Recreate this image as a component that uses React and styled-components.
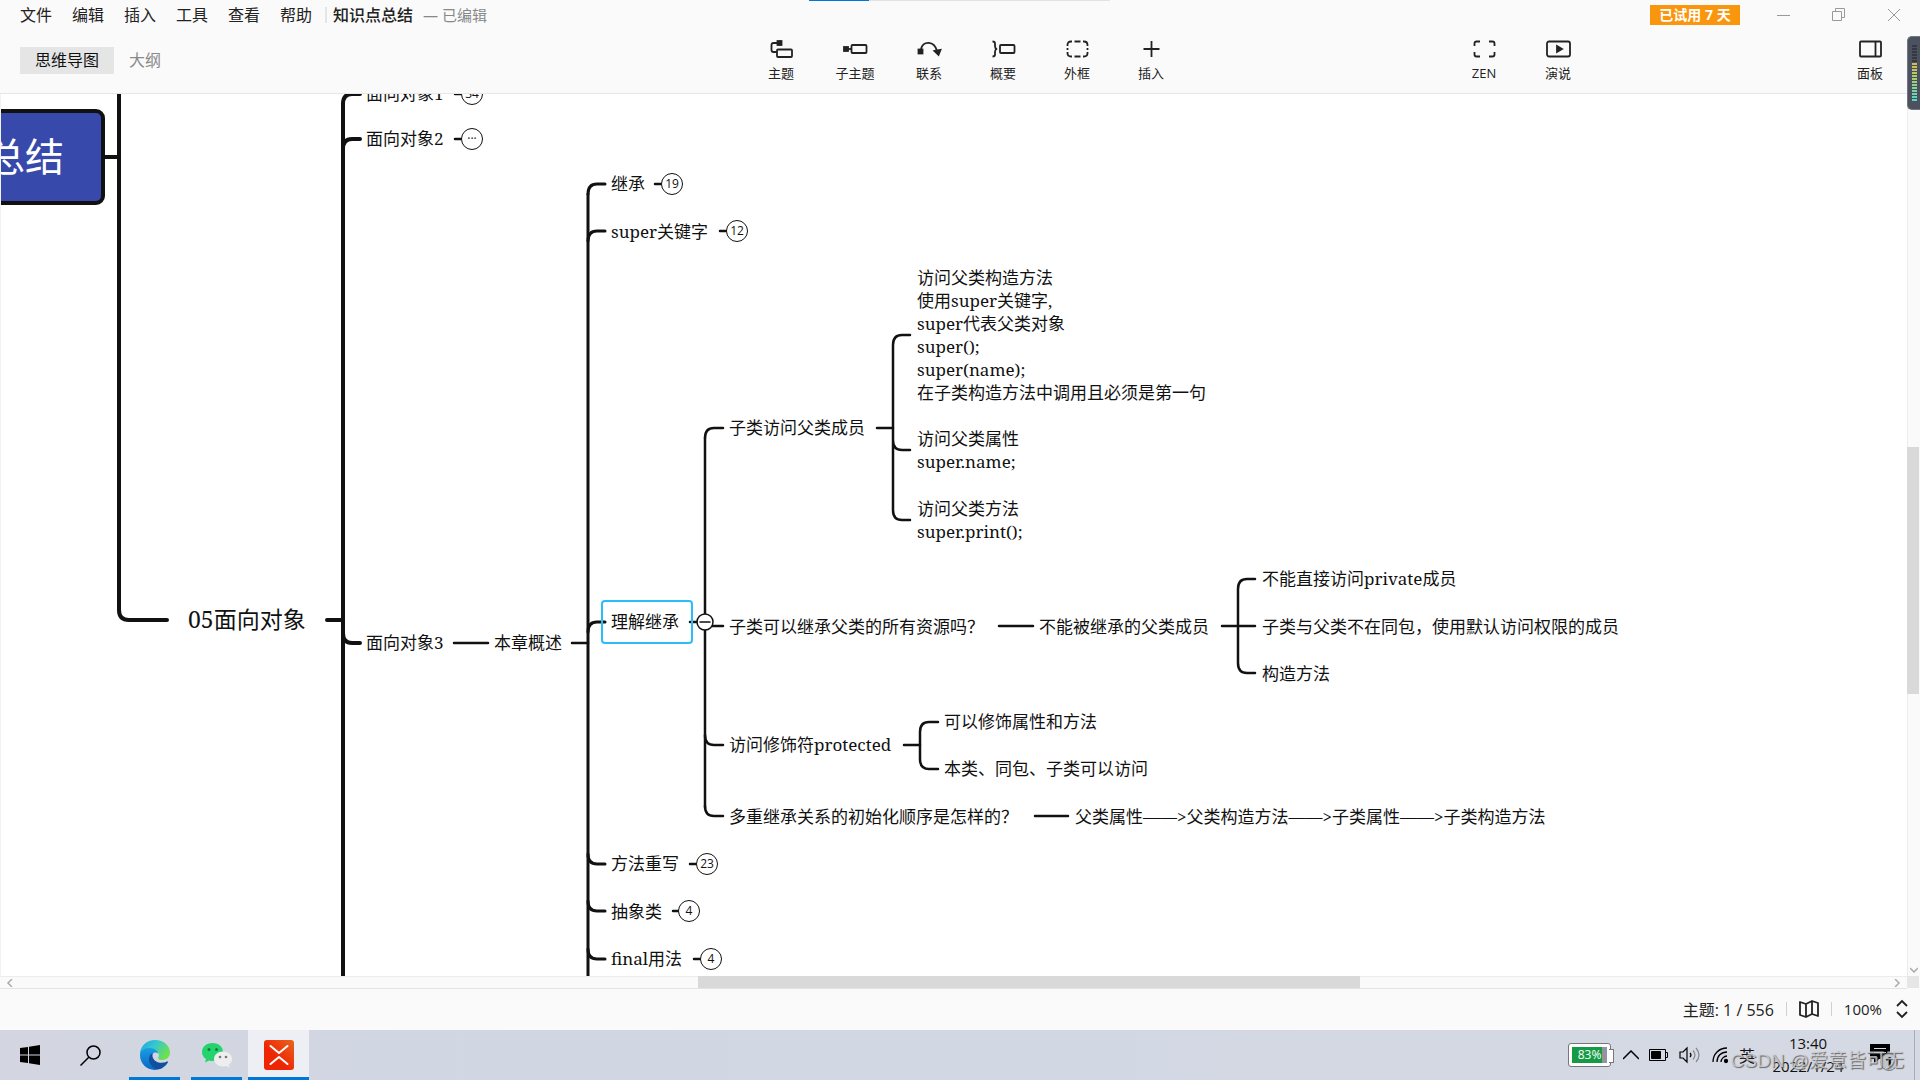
import React from 'react'
import styled, { createGlobalStyle } from 'styled-components'

const INK = '#111'

const GlobalStyle = createGlobalStyle`
    * {
        box-sizing: border-box;
    }
    body {
        margin: 0;
        overflow: hidden;
        background: #fafafa;
        color: #222;
        font-family: 'Open Sans', 'Noto Sans CJK SC', sans-serif;
    }
    button {
        border: 0;
        padding: 0;
        background: none;
        color: inherit;
        font: inherit;
    }
    svg {
        display: block;
    }
`

const Window = styled.div`
    display: flex;
    flex-direction: column;
    height: 100vh;
`

/* ---------- header ---------- */

const Header = styled.header`
    flex: none;
    height: 94px;
    border-bottom: 1px solid #e6e6e6;
`

const TitleBar = styled.div`
    display: flex;
    align-items: center;
    height: 29px;
    padding: 0 20px;
`

const Menu = styled.nav`
    display: flex;
    gap: 20px;
    padding-right: 13px;
    border-right: 2px solid #e5e5e5;
    font-size: 16px;
    line-height: 16px;
`

const FileName = styled.h1`
    margin: 0 10px 0 6px;
    font-size: 16px;
    font-weight: 500;
    line-height: 24px;
`

const Saved = styled.span`
    flex: 1;
    color: #888;
    font-size: 15px;
    line-height: 24px;
`

const Trial = styled.button`
    width: 90px;
    height: 20px;
    margin-right: 16px;
    background: #f9960e;
    color: #fff;
    font-size: 14px;
    font-weight: 700;
    line-height: 20px;
`

const WindowButton = styled.button`
    display: flex;
    justify-content: center;
    width: 55px;
    color: #999;

    &:last-child {
        margin-right: -21px;
    }
`

const ToolBar = styled.div`
    display: flex;
    height: 64px;
`

const Tabs = styled.div`
    display: flex;
    flex: 1 1 0;
    align-items: center;
    padding: 0 0 2px 20px;
`

const Tab = styled.button`
    height: 27px;
    padding: 0 15px;
    background: ${(p) => (p.$active ? '#e5e5e5' : 'none')};
    color: ${(p) => (p.$active ? '#111' : '#8a8a8a')};
    font-size: 16px;
    line-height: 27px;
`

const Tools = styled.div`
    display: flex;
    padding-right: 8px;
`

const SideTools = styled.div`
    display: flex;
    flex: 1 1 0;

    & > :first-child {
        margin-left: 251px;
    }
    & > :last-child {
        margin: 0 13px 0 auto;
    }
`

const ToolButton = styled.button`
    display: flex;
    flex-direction: column;
    align-items: center;
    gap: 4px;
    width: 74px;
    padding-top: 10px;
    font-size: 13px;
    line-height: 20px;
`

const Progress = styled.div`
    position: absolute;
    top: 0;
    left: 809px;
    width: 301px;
    height: 1px;
    background: linear-gradient(90deg, #0078d7 60px, #e2e2e2 60px);
`

const Meter = styled.div`
    position: absolute;
    z-index: 1;
    top: 36px;
    right: 0;
    width: 13px;
    height: 74px;
    padding: 8px 3px 0 4px;
    border: 1px solid #73777f;
    border-right: 0;
    border-radius: 5px 0 0 5px;
    background: #4c5160;
`

const MeterBars = styled.div`
    height: 57px;
    background:
        repeating-linear-gradient(transparent 0 2px, #4c5160 2px 3px),
        linear-gradient(#343843 17px, #d8b84c 17px, #a8d070 34px, #4fd8c8);
`

/* ---------- mind map ---------- */

const Workspace = styled.main`
    display: grid;
    flex: 1;
    grid-template-columns: minmax(0, 1fr) 13px;
    grid-template-rows: minmax(0, 1fr) 13px;
    min-height: 0;
`

const Canvas = styled.div`
    position: relative;
    overflow: hidden;
    border-left: 1px solid #f2f2f2;
    background: #fff;
`

const Lines = styled.svg`
    position: absolute;
    top: 0;
    left: -1px;
    fill: none;
    stroke: ${INK};
    stroke-linecap: round;
`

const Topic = styled.div`
    position: absolute;
    top: ${(p) => p.$y}px;
    left: ${(p) => p.$x - 1}px;
    transform: translateY(-50%);
    color: ${INK};
    font-size: ${(p) => (p.$big ? 23 : 17)}px;
    line-height: ${(p) => (p.$big ? 30 : 23)}px;
    font-family: 'Noto Serif', 'Noto Sans CJK SC', serif;
    white-space: pre;
`

const Root = styled.div`
    position: absolute;
    top: 15px;
    left: -200px;
    width: 304px;
    height: 96px;
    padding-right: 37px;
    border: 4px solid ${INK};
    border-radius: 9px;
    background: #3849ac;
    color: #fff;
    font-family: 'Noto Sans CJK SC', sans-serif;
    font-size: 39px;
    line-height: 82px;
    text-align: right;
    white-space: nowrap;
`

const Selection = styled.div`
    position: absolute;
    top: 506px;
    left: 600px;
    width: 92px;
    height: 44px;
    border: 2px solid #2bbcfb;
    border-radius: 4px;
`

const Count = styled.button`
    position: absolute;
    top: ${(p) => p.$y - 11}px;
    left: ${(p) => p.$x - 12}px;
    width: 22px;
    height: 22px;
    border: 1px solid ${INK};
    border-radius: 50%;
    background: #fff;
    color: ${INK};
    font-size: 12px;
    line-height: 20px;
    text-align: center;
`

const VerticalBar = styled.div`
    display: flex;
    flex-direction: column;
    align-items: center;
    justify-content: flex-end;
    position: relative;
    border-left: 1px solid #ececec;
    background: #fafafa;
    padding-bottom: 3px;
`

const HorizontalBar = styled.div`
    display: flex;
    align-items: center;
    justify-content: space-between;
    position: relative;
    padding: 0 6px;
    border-top: 1px solid #ececec;
    border-bottom: 1px solid #e4e4e4;
`

const Thumb = styled.div`
    position: absolute;
    background: #d9d9d9;
    ${(p) =>
        p.$vertical
            ? 'top: 40%; left: -1px; width: 12px; height: 28%;'
            : 'top: -1px; left: 36.6%; width: 34.7%; height: 12px;'}
`

const Corner = styled.div`
    background: #e6e6e6;
    margin: 0 1px 1px 0;
`

/* ---------- status bar ---------- */

const StatusBar = styled.footer`
    display: flex;
    flex: none;
    align-items: center;
    justify-content: flex-end;
    gap: 12px;
    height: 41px;
    padding: 0 12px 2px 0;
    font-size: 15px;
`

const Position = styled.span`
    font-size: 16px;
`

const Zoom = styled.button`
    margin-right: 2px;
`

const Divider = styled.i`
    width: 1px;
    height: 14px;
    background: #d0d0d0;
`

/* ---------- taskbar ---------- */

const TaskBar = styled.div`
    position: relative;
    display: flex;
    flex: none;
    height: 50px;
    background: linear-gradient(90deg, #d3d6e1, #d0d7e3 30%, #d3d8e3 70%, #d5d9e4);
    color: #111;
`

const Task = styled.button`
    display: flex;
    align-items: center;
    justify-content: center;
    width: 60px;
    border-bottom: 3px solid transparent;
    padding-top: 3px;
`

const RunningTask = styled(Task)`
    width: ${(p) => (p.$active ? 61 : 51)}px;
    margin-left: ${(p) => (p.$active ? 6 : p.$first ? 9 : 11)}px;
    border-color: #0078d7;
    background: ${(p) => (p.$active ? '#edeff4' : 'none')};
`

const Tray = styled.div`
    display: flex;
    align-items: center;
    gap: 10px;
    margin-left: auto;
    padding-right: 5px;
`

const Battery = styled.div`
    position: relative;
    width: 43px;
    height: 24px;
    margin-right: 2px;
    border: 1px solid #777;
    border-radius: 3px;
    background: linear-gradient(90deg, #169b45 30px, #9095a0 30px) content-box, #fff;
    padding: 3px;
    color: #fff;
    font-size: 12px;
    line-height: 16px;
    text-align: center;

    &::after {
        content: '';
        position: absolute;
        top: 5px;
        right: -4px;
        width: 4px;
        height: 12px;
        border: 1px solid #777;
        border-left: 0;
        background: #fff;
    }
`

const Clock = styled.time`
    width: 86px;
    font-size: 15px;
    line-height: 23px;
    text-align: center;
`

const Notice = styled.button`
    width: 30px;
    margin: 0 5px 0 9px;
`

const ShowDesktop = styled.i`
    align-self: stretch;
    width: 1px;
    margin-left: -1px;
    background: #a8adb8;
`

const Watermark = styled.div`
    position: absolute;
    right: 16px;
    bottom: 5px;
    color: rgba(215, 215, 220, 0.75);
    font-family: 'Liberation Sans', 'Noto Sans CJK SC', sans-serif;
    font-size: 19px;
    line-height: 28px;
    text-shadow: 1px 1px 1px #666;
    white-space: nowrap;
    pointer-events: none;
`

const icons = {
    topic: (
        <>
            <path d="M8 12H4.500q-2 0-2-2V5q0-2 2-2H9" />
            <rect x="8" y="9.500" width="15" height="7.500" rx="1" />
            <rect x="8.500" y="1" width="4" height="4" fill="currentColor" />
        </>
    ),
    subtopic: (
        <>
            <path d="M4 9h5" />
            <rect x="8.500" y="5" width="15" height="8" rx="1" />
            <rect x="1" y="7" width="4" height="4" fill="currentColor" />
        </>
    ),
    relation: (
        <>
            <path d="M4 9C6 1 17 0 20 11" />
            <rect x="1.500" y="9.500" width="4" height="4" fill="currentColor" />
            <path d="m17.500 11 6-1-2 5z" fill="currentColor" />
        </>
    ),
    summary: (
        <>
            <path d="M1.500 1.500q2.500 0 2.500 2v3q0 2 2 2.500-2 .5-2 2.500v3q0 2-2.500 2" />
            <rect x="9" y="5" width="14.500" height="8" rx="1" />
        </>
    ),
    boundary: (
        <>
            <path d="M2.500 6V5q0-3.500 3.500-3.500h1M18 1.500h1q3.500 0 3.500 3.500v1M22.500 12v1q0 3.500-3.500 3.500h-1M7 16.500H6q-3.500 0-3.500-3.500v-1" />
            <path d="M9.500 1.500h6M9.500 16.500h6M2.500 8v2M22.500 8v2" />
        </>
    ),
    insert: <path d="M12.500 1v16M4.500 9h16" />,
    zen: (
        <path d="M2.500 6V3.500q0-2 2-2H8M17 1.500h3.500q2 0 2 2V6M22.500 12v2.500q0 2-2 2H17M8 16.500H4.500q-2 0-2-2V12" />
    ),
    present: (
        <>
            <rect x="1" y="1.500" width="23" height="15" rx="2" />
            <path d="m11 6 5 3-5 3z" fill="currentColor" />
        </>
    ),
    panel: (
        <>
            <rect x="2" y="1.500" width="21" height="15" rx="1" />
            <path d="M17.500 1.500v15" />
        </>
    ),
}

const Tool = ({ icon, label }) => {
    return (
        <ToolButton>
            <svg width="25" height="20" viewBox="0 -1 25 20" fill="none" stroke="currentColor" strokeWidth="1.800">
                {icons[icon]}
            </svg>
            {label}
        </ToolButton>
    )
}

const menus = ['文件', '编辑', '插入', '工具', '查看', '帮助']

const tools = [
    ['topic', '主题'],
    ['subtopic', '子主题'],
    ['relation', '联系'],
    ['summary', '概要'],
    ['boundary', '外框'],
    ['insert', '插入'],
]

const topics = [
    { x: 188, y: 525, text: '05面向对象', big: true },
    { x: 366, y: -1, text: '面向对象1' },
    { x: 366, y: 44, text: '面向对象2' },
    { x: 366, y: 548, text: '面向对象3' },
    { x: 494, y: 548, text: '本章概述' },
    { x: 611, y: 89, text: '继承' },
    { x: 611, y: 137, text: 'super关键字' },
    { x: 611, y: 527, text: '理解继承' },
    { x: 611, y: 769, text: '方法重写' },
    { x: 611, y: 817, text: '抽象类' },
    { x: 611, y: 864, text: 'final用法' },
    { x: 729, y: 333, text: '子类访问父类成员' },
    { x: 729, y: 532, text: '子类可以继承父类的所有资源吗？' },
    { x: 729, y: 650, text: '访问修饰符protected' },
    { x: 729, y: 722, text: '多重继承关系的初始化顺序是怎样的？' },
    {
        x: 917,
        y: 241,
        text: '访问父类构造方法\n使用super关键字,\nsuper代表父类对象\nsuper();\nsuper(name);\n在子类构造方法中调用且必须是第一句',
    },
    { x: 917, y: 356, text: '访问父类属性\nsuper.name;' },
    { x: 917, y: 426, text: '访问父类方法\nsuper.print();' },
    { x: 1039, y: 532, text: '不能被继承的父类成员' },
    { x: 1262, y: 484, text: '不能直接访问private成员' },
    { x: 1262, y: 532, text: '子类与父类不在同包，使用默认访问权限的成员' },
    { x: 1262, y: 579, text: '构造方法' },
    { x: 944, y: 627, text: '可以修饰属性和方法' },
    { x: 944, y: 674, text: '本类、同包、子类可以访问' },
    { x: 1075, y: 722, text: '父类属性——>父类构造方法——>子类属性——>子类构造方法' },
]

const counts = [
    { x: 472, y: 0, text: '34' },
    { x: 472, y: 45, text: '···' },
    { x: 672, y: 90, text: '19' },
    { x: 737, y: 137, text: '12' },
    { x: 707, y: 770, text: '23' },
    { x: 689, y: 817, text: '4' },
    { x: 711, y: 865, text: '4' },
]

// a rounded elbow that leaves the trunk at x and ends at the topic
const elbow = (x, y, end, dir) => `M${x} ${y + dir * 10}q0 ${-dir * 10} 9 ${-dir * 10}H${end}`

const MindMap = () => {
    return (
        <Canvas>
            <Lines width="100%" height="100%">
                <g strokeWidth="4">
                    <path d="M119 -5V516q0 10 10 10H167" />
                    <path d="M343 10V890" />
                    <path d={elbow(343, 0, 360, 1) + elbow(343, 45, 360, 1) + elbow(343, 549, 360, -1)} />
                    <path d="M104 63H119M327 526H343" />
                </g>
                <g strokeWidth="3">
                    <path d="M588 100V890" />
                    <path d={[90, 137, 528].map((y) => elbow(588, y, 605, 1)).join('')} />
                    <path d={[770, 817, 865].map((y) => elbow(588, y, 605, -1)).join('')} />
                    <path d="M454 549H488M572 549H588" strokeWidth="2.500" />
                </g>
                <g strokeWidth="2.500">
                    <path d="M705 344V713" />
                    <path d={elbow(705, 334, 723, 1) + elbow(705, 651, 723, -1) + elbow(705, 722, 723, -1)} />
                    <path d="M712 532H723M877 334H893M999 532H1033M1222 532H1255M904 651H920M1035 722H1068" />
                    <path d={`M893 251V416${elbow(893, 241, 910, 1)}${elbow(893, 356, 910, -1)}${elbow(893, 426, 910, -1)}`} />
                    <path d={`M1238 495V569${elbow(1238, 485, 1255, 1)}${elbow(1238, 579, 1255, -1)}`} />
                    <path d={`M920 638V665${elbow(920, 628, 938, 1)}${elbow(920, 675, 938, -1)}`} />
                    <path d="M455 0h6M455 45h6M655 90h6M720 137h6M690 528h7M690 770h6M673 817h6M694 865h6" />
                </g>
                <circle cx="705" cy="528" r="8" fill="#fff" strokeWidth="1.500" />
                <path d="M700 528h10" strokeWidth="1.500" />
            </Lines>
            <Root>知识点总结</Root>
            <Selection />
            {topics.map((t) => (
                <Topic key={t.text} $x={t.x} $y={t.y} $big={t.big}>
                    {t.text}
                </Topic>
            ))}
            {counts.map((c) => (
                <Count key={c.y} $x={c.x} $y={c.y}>
                    {c.text}
                </Count>
            ))}
        </Canvas>
    )
}

const EdgeLogo = () => (
    <svg width="30" height="30" viewBox="0 0 30 30">
        <defs>
            <linearGradient id="edgeTop" x1="0" y1="0" x2="1" y2="0.500">
                <stop offset="0" stopColor="#1fa2e0" />
                <stop offset="0.500" stopColor="#35c8d0" />
                <stop offset="1" stopColor="#6de04e" />
            </linearGradient>
            <linearGradient id="edgeSide" x1="0" y1="0" x2="0" y2="1">
                <stop offset="0" stopColor="#1b9de2" />
                <stop offset="1" stopColor="#0668c6" />
            </linearGradient>
        </defs>
        <path d="M0 14C0 6 7 0 15 0c9 0 15 6 15 12.500C30 17 26.500 20 22.500 20c-4 0-5-1.500-4-3 1.500-2.500 0-6-5-7C8 9 2 10 0 14z" fill="url(#edgeTop)" />
        <path d="M0 15c0-4 4-7 9-7 5.500 0 9 3 9.500 6-3-3-7-1-7 3.500C11.500 23 15 28 21 28.500 11 33 0 26 0 15z" fill="url(#edgeSide)" />
        <path d="M12.500 13C8 16 8 21 11 25c3 4.500 9 5.500 12 2.500 2.500-1.500 4-3.500 5-5.200.4-.8-.3-1-1-.7-5 2.400-13 1.400-14.500-5.100z" fill="#124f9c" />
    </svg>
)

const WeChatLogo = () => (
    <svg width="32" height="28" viewBox="0 0 32 28">
        <path d="M11.500 2C5 2 1 6 1 11c0 3 1.500 5.500 4 7l-1 3.500 4-2c1 .4 2.300.5 3.500.5C18 20 22 16 22 11S18 2 11.500 2z" fill="#22d46b" />
        <circle cx="8" cy="8.500" r="1.500" fill="#157a42" />
        <circle cx="15.500" cy="8.500" r="1.500" fill="#157a42" />
        <path d="M22 10.500c-5 0-9 3.300-9 7.500s4 7.500 9 7.500c1.200 0 2.400-.2 3.400-.5l3 1.700-.7-2.900c2-1.400 3.300-3.500 3.300-5.800 0-4.200-4-7.500-9-7.500z" fill="#eeeeee" />
        <circle cx="19" cy="16" r="1.300" fill="#777" />
        <circle cx="25" cy="16" r="1.300" fill="#777" />
    </svg>
)

const XMindLogo = () => (
    <svg width="30" height="30" viewBox="0 0 30 30">
        <defs>
            <linearGradient id="xmind" x1="1" y1="0" x2="0.400" y2="0.600">
                <stop offset="0" stopColor="#e8661f" />
                <stop offset="1" stopColor="#ee2503" />
            </linearGradient>
        </defs>
        <rect width="30" height="30" rx="3" fill="url(#xmind)" />
        <path d="m6.500 6 8.500 7 8.500-7M6.500 24l8.500-7 8.500 7" fill="none" stroke="#fff" strokeWidth="2" strokeLinecap="round" strokeLinejoin="round" />
    </svg>
)

const App = () => {
    return (
        <Window>
            <GlobalStyle />
            <Header>
                <TitleBar>
                    <Menu>
                        {menus.map((m) => (
                            <button key={m}>{m}</button>
                        ))}
                    </Menu>
                    <FileName>知识点总结</FileName>
                    <Saved>— 已编辑</Saved>
                    <Trial>已试用 7 天</Trial>
                    <WindowButton aria-label="最小化">
                        <svg width="14" height="14" stroke="currentColor">
                            <path d="M0 7.500h13" />
                        </svg>
                    </WindowButton>
                    <WindowButton aria-label="还原">
                        <svg width="14" height="14" fill="none" stroke="currentColor">
                            <path d="M.5 3.500h9v9h-9zM3.500 3V.5h9v9H10" />
                        </svg>
                    </WindowButton>
                    <WindowButton aria-label="关闭">
                        <svg width="14" height="14" stroke="currentColor">
                            <path d="m1 1 12 12M13 1 1 13" />
                        </svg>
                    </WindowButton>
                </TitleBar>
                <ToolBar>
                    <Tabs>
                        <Tab $active>思维导图</Tab>
                        <Tab>大纲</Tab>
                    </Tabs>
                    <Tools>
                        {tools.map(([icon, label]) => (
                            <Tool key={icon} icon={icon} label={label} />
                        ))}
                    </Tools>
                    <SideTools>
                        <Tool icon="zen" label="ZEN" />
                        <Tool icon="present" label="演说" />
                        <Tool icon="panel" label="面板" />
                    </SideTools>
                </ToolBar>
            </Header>
            <Progress />
            <Meter>
                <MeterBars />
            </Meter>

            <Workspace>
                <MindMap />
                <VerticalBar>
                    <Thumb $vertical />
                    <svg width="8" height="6" fill="none" stroke="#aaa" strokeWidth="1.500">
                        <path d="m0 1 4 4 4-4" />
                    </svg>
                </VerticalBar>
                <HorizontalBar>
                    <Thumb />
                    <svg width="8" height="8" fill="none" stroke="#aaa" strokeWidth="1.500">
                        <path d="M6 0 2 4l4 4" />
                    </svg>
                    <svg width="8" height="8" fill="none" stroke="#aaa" strokeWidth="1.500">
                        <path d="m2 0 4 4-4 4" />
                    </svg>
                </HorizontalBar>
                <Corner />
            </Workspace>

            <StatusBar>
                <Position>主题: 1 / 556</Position>
                <Divider />
                <svg width="20" height="18" fill="none" stroke="#222" strokeWidth="1.800" strokeLinejoin="round">
                    <path d="m1 2 6 2 6-3 6 2v13l-6-2-6 3-6-2zM7 4v13M13 1v13" />
                </svg>
                <Divider />
                <Zoom>100%</Zoom>
                <svg width="12" height="20" fill="none" stroke="#222" strokeWidth="1.800">
                    <path d="m1 7 5-5 5 5M1 13l5 5 5-5" />
                </svg>
            </StatusBar>

            <TaskBar>
                <Task aria-label="开始">
                    <svg width="20" height="20" viewBox="0 0 20 20" fill="#000">
                        <path d="M0 3 8 2v7.500H0zM9 1.800 20 0v9.500H9zM0 10.500h8V18l-8-1zM9 10.500h11V20L9 18.200z" />
                    </svg>
                </Task>
                <Task aria-label="搜索">
                    <svg width="21" height="21" viewBox="0 0 21 21" fill="none" stroke="#000" strokeWidth="1.500">
                        <circle cx="13.500" cy="7.500" r="6.500" />
                        <path d="m9 12-8.500 8.500" />
                    </svg>
                </Task>
                <RunningTask $first aria-label="Edge">
                    <EdgeLogo />
                </RunningTask>
                <RunningTask aria-label="微信">
                    <WeChatLogo />
                </RunningTask>
                <RunningTask $active aria-label="XMind">
                    <XMindLogo />
                </RunningTask>
                <Tray>
                    <Battery>83%</Battery>
                    <svg width="16" height="10" fill="none" stroke="#000" strokeWidth="1.500">
                        <path d="m0 9 8-8 8 8" />
                    </svg>
                    <svg width="20" height="12" fill="none" stroke="#000">
                        <path d="M.5.5h16v11H.5zM17 3.500h1.500v5H17" />
                        <path d="M2.500 2.500h9v7h-9z" fill="#000" />
                    </svg>
                    <svg width="22" height="18" fill="none" stroke="#000" strokeWidth="1.200">
                        <path d="M1 6h3l4-4v14l-4-4H1zM11 7q2 2 0 4" />
                        <path d="M14 4.500q4 4.500 0 9M17 2q6 7 0 14" stroke="#888" />
                    </svg>
                    <svg width="18" height="18" fill="none" stroke="#000" strokeWidth="1.300">
                        <path d="M2 16C2 8 8 2 16 2M6 16C6 10 10 6 16 6M10 16c0-3 3-6 6-6" />
                        <circle cx="15" cy="15" r="1.500" fill="#000" />
                    </svg>
                    <span>英</span>
                    <Clock>
                        13:40
                        <br />
                        2022/1/24
                    </Clock>
                    <Notice aria-label="通知">
                        <svg width="30" height="32" viewBox="0 0 30 32">
                            <path d="M0 5h20v15H9l-5 5v-5H0z" />
                            <path d="M4 9.500h12M4 13.500h12" stroke="#d3d8e3" />
                            <circle cx="19" cy="23" r="8.500" fill="#bfc3cb" stroke="#777" />
                            <text x="15" y="28" fontSize="14" fontWeight="700">
                                1
                            </text>
                        </svg>
                    </Notice>
                    <ShowDesktop />
                </Tray>
                <Watermark>CSDN @爱意皆可无</Watermark>
            </TaskBar>
        </Window>
    )
}

export default App
